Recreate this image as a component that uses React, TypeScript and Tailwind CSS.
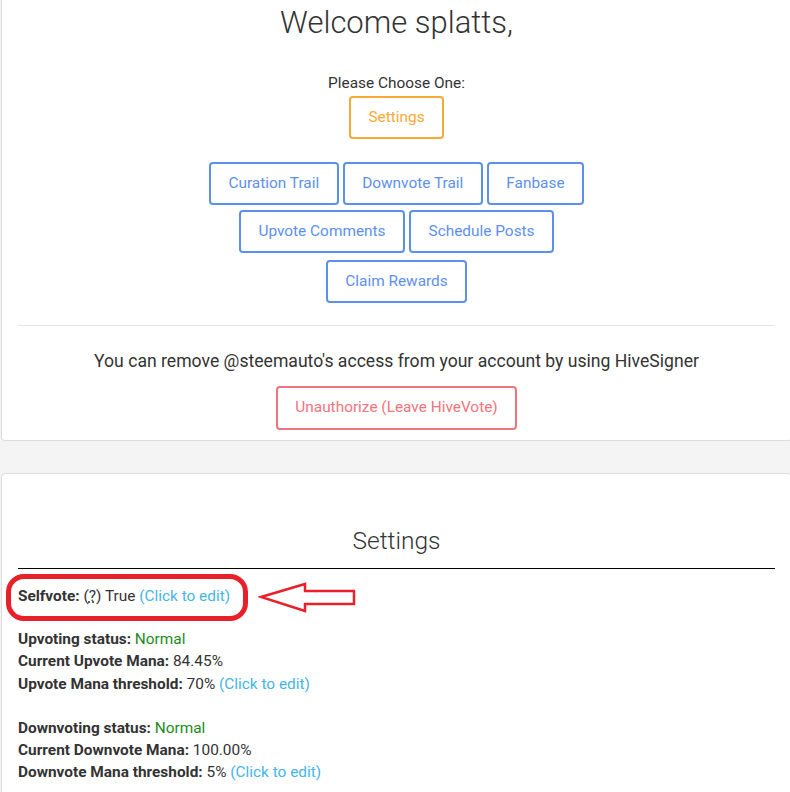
import React from "react";

const blueBtn =
  "h-[43px] px-[17.5px] rounded-[4px] border-2 border-[#5d8ff0] text-[#5d8ff0] text-[15.4px] bg-white";

const Label = ({ children }: { children: React.ReactNode }) => (
  <span className="font-bold">{children}</span>
);

const EditLink = () => <span className="text-[#45b5e8]">(Click to edit)</span>;

const App = () => {
  return (
    <div className="w-[790px] min-h-[792px] overflow-hidden bg-[#f4f4f4] font-['Roboto',sans-serif] text-[#333]">
      {/* Top card - menu */}
      <div className="ml-px w-[791px] bg-white border-l border-r border-b border-[#dcdcdc] rounded-b-[4px] px-4 pt-[5px] pb-[10px]">
        <h1 className="text-center text-[31px] leading-[36px] font-light">
          Welcome splatts,
        </h1>

        <p className="mt-[32px] text-center text-[15.4px] leading-[20px]">
          Please Choose One:
        </p>
        <div className="mt-[3px] flex justify-center">
          <button className="h-[43px] px-[17px] rounded-[4px] border-2 border-[#f8a935] text-[#f8a935] text-[15.4px] bg-white">
            Settings
          </button>
        </div>

        <div className="mt-[23px] flex justify-center gap-1">
          <button className={blueBtn}>Curation Trail</button>
          <button className={blueBtn}>Downvote Trail</button>
          <button className={blueBtn}>Fanbase</button>
        </div>
        <div className="mt-[5px] flex justify-center gap-1">
          <button className={blueBtn}>Upvote Comments</button>
          <button className={blueBtn}>Schedule Posts</button>
        </div>
        <div className="mt-[7px] flex justify-center">
          <button className={blueBtn}>Claim Rewards</button>
        </div>

        <hr className="mt-[22px] border-t border-[#e6e6e6]" />

        <p className="mt-[23px] text-center text-[17.6px] leading-[24px]">
          You can remove @steemauto's access from your account by using
          HiveSigner
        </p>
        <div className="mt-[13px] flex justify-center">
          <button className="h-[44px] px-[17px] rounded-[4px] border-2 border-[#f3737d] text-[#f3737d] text-[15.4px] bg-white">
            Unauthorize (Leave HiveVote)
          </button>
        </div>
      </div>

      {/* Settings card */}
      <div className="mt-8 ml-px w-[791px] bg-white border border-[#dcdcdc] rounded-t-[4px] px-4 pt-[52px] pb-6">
        <h2 className="text-center text-[24.5px] leading-[30px] font-light">
          Settings
        </h2>
        <hr className="mt-[12px] border-t border-black" />

        <div className="mt-[16px] text-[15.4px] leading-[22.2px]">
          <div className="relative">
            <Label>Selfvote: </Label>
            (<abbr className="underline decoration-dotted">?</abbr>)
            {" "}True <EditLink />
            {/* annotation */}
            <div className="absolute left-[-12px] top-[-11px] w-[242px] h-[47px] rounded-[18px] border-[5px] border-[#e8202a]" />
            <svg
              className="absolute left-[240px] top-[-3px]"
              width="100"
              height="32"
              viewBox="0 0 100 32"
            >
              <polygon
                points="3,15 47,2 47,9 96,9 96,22 47,22 47,29"
                fill="white"
                stroke="#e8202a"
                strokeWidth="2.5"
                strokeLinejoin="miter"
              />
            </svg>
          </div>
          <div className="h-[21px]" />
          <div>
            <Label>Upvoting status: </Label>
            <span className="text-[#1e8a1e]">Normal</span>
          </div>
          <div>
            <Label>Current Upvote Mana: </Label>84.45%
          </div>
          <div>
            <Label>Upvote Mana threshold: </Label>70% <EditLink />
          </div>
          <div className="h-[22px]" />
          <div>
            <Label>Downvoting status: </Label>
            <span className="text-[#1e8a1e]">Normal</span>
          </div>
          <div>
            <Label>Current Downvote Mana: </Label>100.00%
          </div>
          <div>
            <Label>Downvote Mana threshold: </Label>5% <EditLink />
          </div>
        </div>
      </div>
    </div>
  );
};

export default App;
